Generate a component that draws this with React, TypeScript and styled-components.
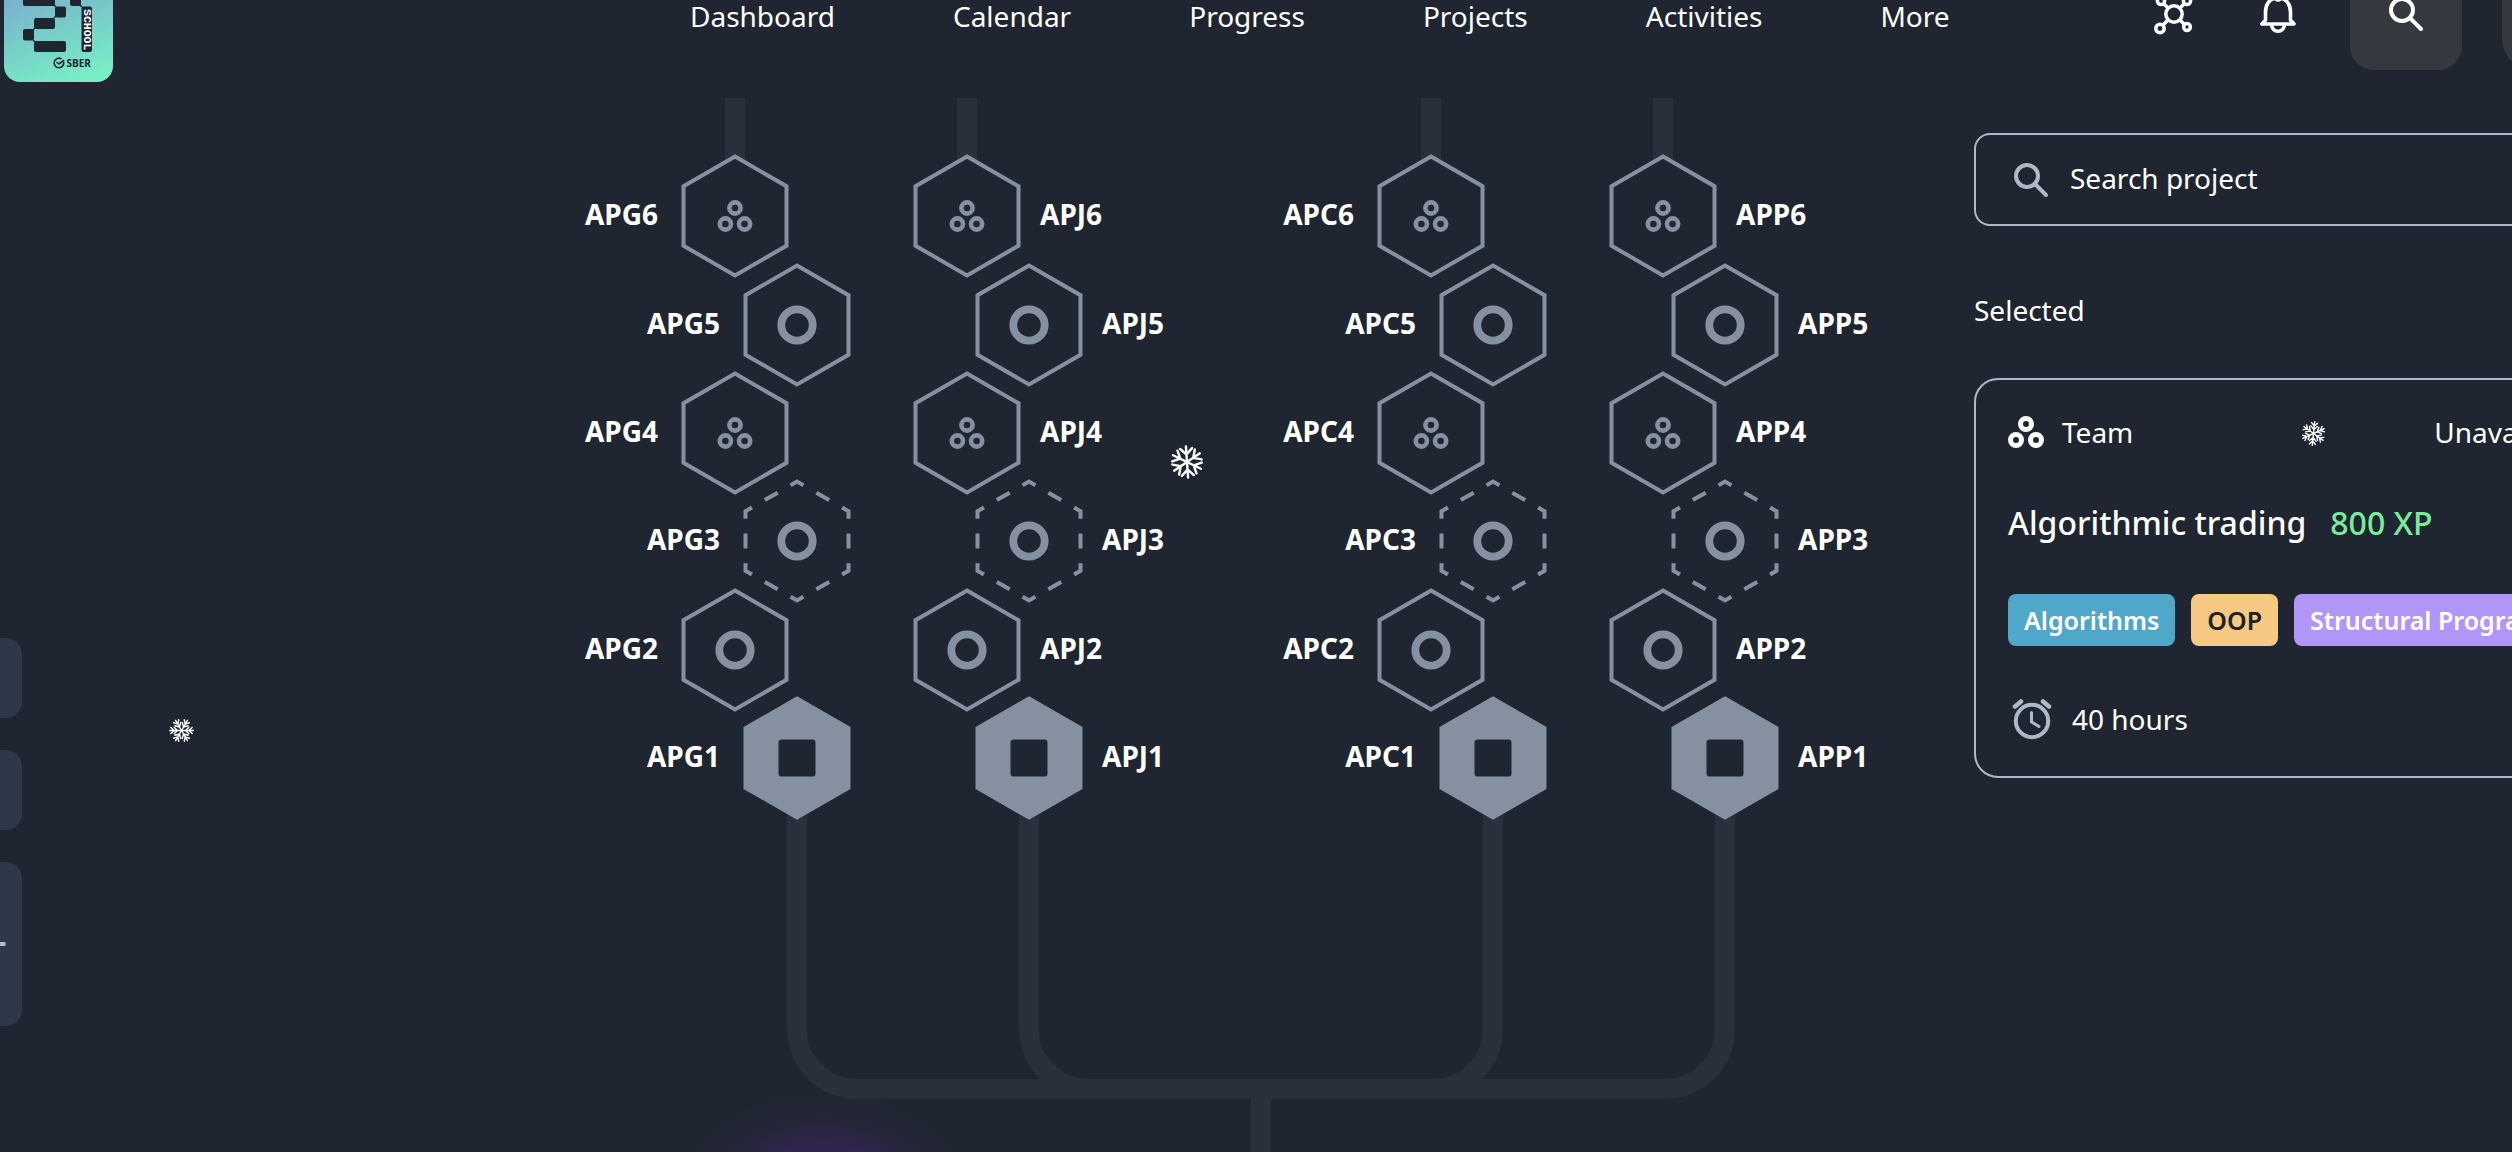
import React from "react";
import styled, { createGlobalStyle } from "styled-components";

const color = {
  bg: "#202631",
  line: "#2a303b",
  node: "#8591a1",
  border: "#aeb9c8",
  white: "#ffffff",
  side: "#2f3848",
  button: "#35383f",
  green: "#7beb9c",
};

const GlobalStyle = createGlobalStyle`
  *, *::before, *::after { box-sizing: border-box; }
  body {
    margin: 0;
    background: ${color.bg};
    color: ${color.white};
    font-family: "Noto Sans", "Open Sans", sans-serif;
    font-size: 28px;
    line-height: 40px;
  }
  button, input { font: inherit; color: inherit; }
`;

const Page = styled.div`
  position: relative;
  height: 100vh;
  overflow: hidden;
`;

const Shell = styled.div`
  display: flex;
  flex-direction: column;
  width: calc(100% + 102px);
  height: calc(100% + 70px);
  margin-top: -70px;
`;

const Header = styled.header`
  display: flex;
  align-items: center;
  flex: none;
  height: 168px;
  padding-left: 4px;
`;

const Logo = styled.a`
  display: block;
  width: 109px;
  height: 136px;
  border-radius: 16px;
  overflow: hidden;
  background: linear-gradient(160deg, #7d8fd8 0%, #78bfca 45%, #77f6c4 100%);
`;

const Nav = styled.nav`
  display: flex;
  gap: 118px;
  margin-left: 577px;
  padding-top: 4px;
  line-height: 28px;
`;

const NavLink = styled.a`
  color: inherit;
  text-decoration: none;
  white-space: nowrap;
`;

const Actions = styled.div`
  display: flex;
  align-items: center;
  gap: 40px;
  margin-left: auto;
`;

const IconButton = styled.button<{ $filled?: boolean }>`
  display: grid;
  place-items: center;
  width: ${(p) => (p.$filled ? 112 : 64)}px;
  height: ${(p) => (p.$filled ? 112 : 64)}px;
  padding: 0;
  border: 0;
  border-radius: 24px;
  background: ${(p) => (p.$filled ? color.button : "transparent")};
`;

const Avatar = styled(IconButton)`
  border-radius: 32px;
`;

const Body = styled.div`
  display: flex;
  flex: 1;
  min-height: 0;
`;

const SideBar = styled.aside`
  display: flex;
  flex-direction: column;
  gap: 32px;
  flex: none;
  width: 22px;
  padding-top: 540px;
`;

const SideButton = styled.button<{ $tall?: boolean }>`
  display: flex;
  align-items: center;
  height: ${(p) => (p.$tall ? 164 : 80)}px;
  padding: 0;
  border: 0;
  border-radius: 0 16px 16px 0;
  background: ${color.side};
`;

const Minus = styled.span`
  width: 6px;
  height: 4px;
  border-radius: 0 2px 2px 0;
  background: ${color.border};
`;

const Board = styled.main`
  position: relative;
  flex: none;
  width: 1362px;
  margin: 0 32px 0 auto;
`;

const Wires = styled.svg`
  display: block;
  width: 1362px;
  height: 1054px;
`;

const Node = styled.button<{ $x: number; $y: number; $side: "left" | "right" }>`
  position: absolute;
  top: ${(p) => p.$y - 62}px;
  ${(p) => (p.$side === "left" ? `right: ${1362 - p.$x - 54}px;` : `left: ${p.$x - 54}px;`)}
  display: flex;
  flex-direction: ${(p) => (p.$side === "left" ? "row-reverse" : "row")};
  align-items: center;
  gap: ${(p) => (p.$side === "left" ? 23 : 19)}px;
  padding: 0;
  border: 0;
  background: none;
  font-weight: 700;
`;

const Label = styled.span`
  padding-bottom: 4px;
`;

const Panel = styled.section`
  display: flex;
  flex-direction: column;
  flex: none;
  width: 640px;
  padding-top: 35px;
`;

const SearchBox = styled.label`
  display: flex;
  align-items: center;
  gap: 16px;
  height: 93px;
  padding: 0 32px;
  border: 2px solid ${color.border};
  border-radius: 16px;
`;

const SearchInput = styled.input`
  flex: 1;
  min-width: 0;
  height: 44px;
  padding: 0 0 4px;
  border: 0;
  outline: 0;
  background: none;
  &::placeholder { color: ${color.white}; opacity: 1; }
`;

const SectionTitle = styled.h2`
  margin: 64px 0 48px;
  font-size: 28px;
  font-weight: 400;
  line-height: 40px;
`;

const Card = styled.article`
  display: flex;
  flex-direction: column;
  gap: 49px;
  height: 400px;
  padding: 32px 24px 32px 32px;
  border: 2px solid ${color.border};
  border-radius: 24px;
`;

const CardRow = styled.div<{ $gap: number }>`
  display: flex;
  align-items: center;
  gap: ${(p) => p.$gap}px;
`;

const Status = styled.span`
  margin-left: auto;
`;

const CardTitle = styled.h3`
  margin: 0;
  font-size: 32px;
  font-weight: 500;
  line-height: 44px;
  white-space: nowrap;
`;

const Xp = styled.span`
  color: ${color.green};
  font-size: 32px;
  font-weight: 500;
  line-height: 44px;
`;

const Tag = styled.span<{ $bg: string; $fg?: string }>`
  flex: none;
  padding: 8px 16px;
  border-radius: 8px;
  background: ${(p) => p.$bg};
  color: ${(p) => p.$fg ?? color.white};
  font-size: 25px;
  font-weight: 600;
  line-height: 36px;
`;

const Flake = styled.svg<{ $x: number; $y: number }>`
  position: absolute;
  left: ${(p) => p.$x}px;
  top: ${(p) => p.$y}px;
  pointer-events: none;
`;

const Glow = styled.div`
  position: absolute;
  left: 663px;
  bottom: -200px;
  width: 320px;
  height: 260px;
  background: radial-gradient(
    closest-side,
    rgba(96, 32, 160, 0.8),
    rgba(96, 32, 160, 0.3) 54%,
    rgba(96, 32, 160, 0.08) 78%,
    transparent
  );
`;

const LogoArt = () => (
  <svg width="109" height="136" viewBox="0 -54 109 136" aria-hidden="true">
    <g fill={color.bg}>
      <rect x="19" y="-27" width="11" height="11" rx="2" />
      <rect x="29" y="-38" width="22" height="11" rx="2" />
      <rect x="51" y="-27" width="11" height="22" rx="2" />
      <rect x="19" y="-5" width="32" height="11" rx="2" />
      <rect x="51" y="6.500" width="11" height="11" rx="2" />
      <rect x="30" y="18" width="21" height="11" rx="2" />
      <rect x="19" y="29" width="11" height="11.500" rx="2" />
      <rect x="30" y="41" width="32" height="11" rx="2" />
      <rect x="66" y="-5" width="11" height="11" rx="2" />
      <rect x="77.500" y="6.500" width="10.500" height="45.500" rx="2" />
      <path d="M50 5l2 2zM50 18l2-2zM29 30l2-2zM29 40l2 2zM76 5l2 2z" stroke={color.bg} strokeWidth="1.500" />
    </g>
    <text
      transform="translate(80 9) rotate(90)"
      fill="#fff"
      fontFamily="Liberation Mono, monospace"
      fontWeight="700"
      fontSize="11.500"
    >
      SCHOOL
    </text>
    <g fill="none" stroke={color.bg} strokeWidth="1.600">
      <path d="M59.500 61.500a4.800 4.800 0 1 1-2-2.600" />
      <path d="M52.500 62l2.500 2 5-3.800" />
    </g>
    <text x="62.500" y="66.700" fill={color.bg} fontFamily="Open Sans, sans-serif" fontWeight="700" fontSize="10">
      SBER
    </text>
  </svg>
);

const NetworkIcon = () => (
  <svg width="44" height="44" viewBox="-22 -22 44 44" fill="none" stroke="#fff" strokeWidth="3.500" aria-hidden="true">
    <circle r="8.200" />
    <circle cx="-13" cy="-13" r="3.600" />
    <circle cx="13" cy="-13" r="3.600" />
    <circle cx="-14" cy="14.500" r="4.200" />
    <circle cx="13" cy="13" r="3.400" />
    <path d="M-6-6l-4.500-4.500M6-6l4.500-4.500M-6 6l-5.500 5.500M6 6l4.500 4.500" />
  </svg>
);

const BellIcon = () => (
  <svg width="40" height="44" viewBox="-20 -22 40 44" fill="none" stroke="#fff" strokeWidth="3.600" strokeLinejoin="round" aria-hidden="true">
    <path d="M-16 10H16L12.500 6V-2C12.500-10 8-15 2.500-16M-2.500-16C-8-15-12.500-10-12.500-2V6L-16 10" strokeLinecap="round" />
    <path d="M-6.300 11a6.300 6.300 0 0 0 12.600 0" />
    <circle cy="-17" r="3" />
  </svg>
);

const SearchIcon = ({ stroke }: { stroke: string }) => (
  <svg width="46" height="46" viewBox="-23 -23 46 46" fill="none" stroke={stroke} strokeWidth="4" strokeLinecap="round" aria-hidden="true">
    <circle cx="-4" cy="-4" r="11" />
    <path d="M5 5L15 15" />
  </svg>
);

const TeamIcon = () => (
  <svg width="36" height="36" viewBox="0 0 36 36" fill="none" stroke="#fff" strokeWidth="5" aria-hidden="true">
    <circle cx="18" cy="10" r="5.500" />
    <circle cx="8" cy="26" r="5.500" />
    <circle cx="28" cy="26" r="5.500" />
  </svg>
);

const ClockIcon = () => (
  <svg width="48" height="48" viewBox="0 0 48 48" fill="none" stroke={color.border} strokeWidth="4" strokeLinecap="round" aria-hidden="true">
    <circle cx="24" cy="26" r="16.200" />
    <path d="M23.500 17.500v9.500l7.500 4.500" strokeWidth="3" />
    <path d="M7 11.500l6-5M41 11.500l-6-5" strokeWidth="4.500" />
  </svg>
);

const SnowFlake = ({ x, y, size, turn, bold }: { x: number; y: number; size: number; turn: number; bold?: boolean }) => (
  <Flake $x={x - size / 2} $y={y - size / 2} width={size} height={size} viewBox="-17 -17 34 34" aria-hidden="true">
    <g fill="none" stroke="#fff" strokeWidth={bold ? 2.4 : 1.9} strokeLinecap="round">
      {[0, 60, 120, 180, 240, 300].map((a) => (
        <path
          key={a}
          d={
            bold
              ? "M0 0V-15.500M0-7.500l-6-6M0-7.500l6-6"
              : "M0 0V-16M0-5.500l-4.500-4.500M0-5.500l4.500-4.500M0-10l-4-4.500M0-10l4-4.500"
          }
          transform={`rotate(${a + turn})`}
        />
      ))}
    </g>
  </Flake>
);

type Kind = "team" | "solo" | "bonus" | "exam";

const HexIcon = ({ kind }: { kind: Kind }) => {
  const hex = "M0-59.500L51.500-29.750V29.750L0 59.500L-51.500 29.750V-29.750Z";
  return (
    <svg width="108" height="124" viewBox="-54 -62 108 124" aria-hidden="true">
      <path
        d={hex}
        pathLength={12}
        fill={kind === "exam" ? color.node : color.bg}
        stroke={color.node}
        strokeWidth="4"
        strokeDasharray={kind === "bonus" ? "0.5 0.5" : undefined}
        strokeDashoffset={0.25}
      />
      {kind === "exam" && <rect x="-18.500" y="-18.500" width="37" height="37" rx="3" fill={color.bg} />}
      {(kind === "solo" || kind === "bonus") && (
        <circle r="15.700" fill="none" stroke={color.node} strokeWidth="7.800" />
      )}
      {kind === "team" && (
        <g fill="none" stroke={color.node} strokeWidth="4.600">
          <circle cy="-8" r="5.600" />
          <circle cx="-9.600" cy="8" r="5.600" />
          <circle cx="9.600" cy="8" r="5.600" />
        </g>
      )}
    </svg>
  );
};

const rows: { level: number; y: number; shift: number; kind: Kind }[] = [
  { level: 6, y: 118, shift: 0, kind: "team" },
  { level: 5, y: 227, shift: 62, kind: "solo" },
  { level: 4, y: 335, shift: 0, kind: "team" },
  { level: 3, y: 443, shift: 62, kind: "bonus" },
  { level: 2, y: 552, shift: 0, kind: "solo" },
  { level: 1, y: 660, shift: 62, kind: "exam" },
];

const tracks: { code: string; x: number; side: "left" | "right" }[] = [
  { code: "APG", x: 155, side: "left" },
  { code: "APJ", x: 387, side: "right" },
  { code: "APC", x: 851, side: "left" },
  { code: "APP", x: 1083, side: "right" },
];

const links = ["Dashboard", "Calendar", "Progress", "Projects", "Activities", "More"];

export default function App() {
  return (
    <>
      <GlobalStyle />
      <Page>
        <Glow />
        <Shell>
          <Header>
            <Logo href="#" aria-label="School 21">
              <LogoArt />
            </Logo>
            <Nav>
              {links.map((l) => (
                <NavLink href="#" key={l}>{l}</NavLink>
              ))}
            </Nav>
            <Actions>
              <IconButton aria-label="Network"><NetworkIcon /></IconButton>
              <IconButton aria-label="Notifications"><BellIcon /></IconButton>
              <IconButton $filled aria-label="Search"><SearchIcon stroke="#fff" /></IconButton>
              <Avatar $filled aria-label="Profile" />
            </Actions>
          </Header>
          <Body>
            <SideBar>
              <SideButton aria-label="Home view" />
              <SideButton aria-label="Center view" />
              <SideButton $tall aria-label="Zoom"><Minus /></SideButton>
            </SideBar>
            <Board>
              <Wires viewBox="0 0 1362 1054" fill="none" stroke={color.line} strokeWidth="20" aria-hidden="true">
                {tracks.map((t) => (
                  <path key={t.code} d={`M${t.x} 0V118`} />
                ))}
                <path d="M217 660V931A60 60 0 0 0 277 991H1085A60 60 0 0 0 1145 931V660" />
                <path d="M449 660V931A60 60 0 0 0 509 991H853A60 60 0 0 0 913 931V660" />
                <path d="M681 991V1054" />
              </Wires>
              {tracks.map((t) =>
                rows.map((r) => (
                  <Node key={t.code + r.level} $x={t.x + r.shift} $y={r.y} $side={t.side}>
                    <HexIcon kind={r.kind} />
                    <Label>{t.code + r.level}</Label>
                  </Node>
                ))
              )}
            </Board>
            <Panel>
              <SearchBox>
                <SearchIcon stroke={color.border} />
                <SearchInput type="text" placeholder="Search project" aria-label="Search project" />
              </SearchBox>
              <SectionTitle>Selected</SectionTitle>
              <Card>
                <CardRow $gap={18}>
                  <TeamIcon />
                  <span>Team</span>
                  <Status>Unavailable</Status>
                </CardRow>
                <CardRow $gap={24}>
                  <CardTitle>Algorithmic trading</CardTitle>
                  <Xp>800 XP</Xp>
                </CardRow>
                <CardRow $gap={16}>
                  <Tag $bg="#4fa8c9">Algorithms</Tag>
                  <Tag $bg="#f5c982" $fg="#202124">OOP</Tag>
                  <Tag $bg="#b195f7">Structural Programming</Tag>
                </CardRow>
                <CardRow $gap={16}>
                  <ClockIcon />
                  <span>40 hours</span>
                </CardRow>
              </Card>
            </Panel>
          </Body>
        </Shell>
        <SnowFlake x={1187} y={462} size={34} turn={-4} bold />
        <SnowFlake x={181} y={730} size={25} turn={30} />
        <SnowFlake x={2313} y={433} size={25} turn={6} />
      </Page>
    </>
  );
}
